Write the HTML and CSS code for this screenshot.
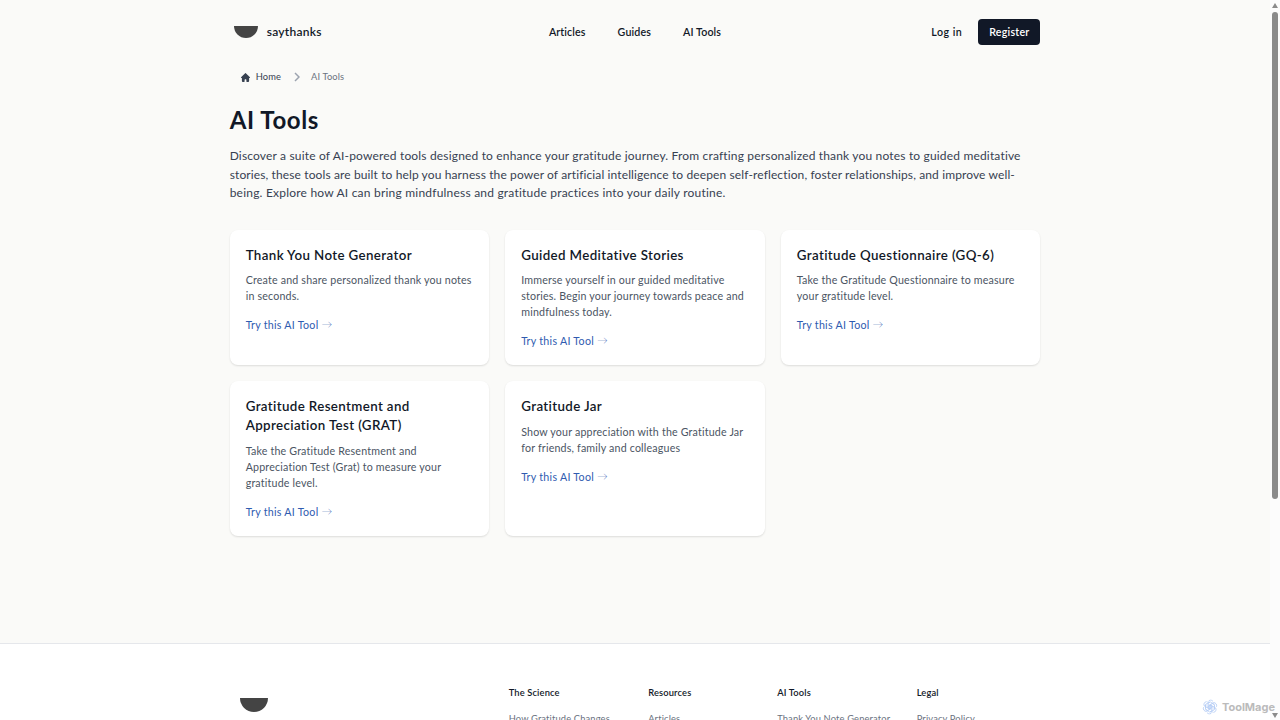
FILE: index.html
```
<!DOCTYPE html>
<html lang="en">
<head>
    <meta charset="UTF-8">
    <meta name="viewport" content="width=device-width, initial-scale=1.0">
    <title>AI Tools - saythanks</title>
    <link rel="stylesheet" href="styles.css">
</head>
<body>

    <div class="page">
        <header class="container header">
            <a class="brand" href="#">
                <svg class="logo" viewBox="0 0 24 12"><path d="M0 0h24a12 12 0 0 1-24 0z"/></svg>
                <span>saythanks</span>
            </a>
            <nav class="nav">
                <a href="#">Articles</a>
                <a href="#">Guides</a>
                <a href="#">AI Tools</a>
            </nav>
            <div class="account">
                <a href="#">Log in</a>
                <a class="button" href="#">Register</a>
            </div>
        </header>

        <main class="container">
            <nav class="breadcrumb">
                <svg class="home" viewBox="0 0 20 20"><path d="M19.7 9.300l-2-2-7-7a1 1 0 0 0-1.400 0l-7 7-2 2a1 1 0 0 0 1 1.700H2V18a2 2 0 0 0 2 2h3a1 1 0 0 0 1-1v-4a1 1 0 0 1 1-1h2a1 1 0 0 1 1 1v4a1 1 0 0 0 1 1h3a2 2 0 0 0 2-2v-7h.7a1 1 0 0 0 1-1.700z"/></svg>
                <a href="#">Home</a>
                <svg class="chevron" viewBox="0 0 6 10"><path d="M1 1l4 4-4 4"/></svg>
                <span>AI Tools</span>
            </nav>

            <h1>AI Tools</h1>
            <p class="intro">
                <span class="line1">Discover a suite of AI-powered tools designed to enhance your gratitude journey. From crafting personalized thank you notes to guided meditative</span><br>
                <span class="line2">stories, these tools are built to help you harness the power of artificial intelligence to deepen self-reflection, foster relationships, and improve well-</span><br>
                <span class="line3">being. Explore how AI can bring mindfulness and gratitude practices into your daily routine.</span>
            </p>

            <div class="cards">
                <div class="card">
                    <h2>Thank You Note Generator</h2>
                    <p>Create and share personalized thank you notes<br>in seconds.</p>
                    <a href="#">Try this AI Tool <span class="arrow">→</span></a>
                </div>
                <div class="card">
                    <h2>Guided Meditative Stories</h2>
                    <p>Immerse yourself in our guided meditative<br>stories. Begin your journey towards peace and<br>mindfulness today.</p>
                    <a href="#">Try this AI Tool <span class="arrow">→</span></a>
                </div>
                <div class="card">
                    <h2>Gratitude Questionnaire (GQ-6)</h2>
                    <p>Take the Gratitude Questionnaire to measure<br>your gratitude level.</p>
                    <a href="#">Try this AI Tool <span class="arrow">→</span></a>
                </div>
                <div class="card">
                    <h2>Gratitude Resentment and<br>Appreciation Test (GRAT)</h2>
                    <p>Take the Gratitude Resentment and<br>Appreciation Test (Grat) to measure your<br>gratitude level.</p>
                    <a href="#">Try this AI Tool <span class="arrow">→</span></a>
                </div>
                <div class="card">
                    <h2>Gratitude Jar</h2>
                    <p>Show your appreciation with the Gratitude Jar<br>for friends, family and colleagues</p>
                    <a href="#">Try this AI Tool <span class="arrow">→</span></a>
                </div>
            </div>
        </main>

        <footer class="footer">
            <div class="container footer-inner">
                <svg class="footer-logo" viewBox="0 0 24 12"><path d="M0 0h24a12 12 0 0 1-24 0z"/></svg>
                <div class="footer-links">
                    <div>
                        <h3>The Science</h3>
                        <a href="#">How Gratitude Changes</a>
                    </div>
                    <div>
                        <h3>Resources</h3>
                        <a href="#">Articles</a>
                    </div>
                    <div>
                        <h3>AI Tools</h3>
                        <a href="#">Thank You Note Generator</a>
                    </div>
                    <div>
                        <h3>Legal</h3>
                        <a href="#">Privacy Policy</a>
                    </div>
                </div>
            </div>
        </footer>
    </div>

    <div class="scrollbar">
        <div class="up"></div>
        <div class="thumb"></div>
        <div class="down"></div>
    </div>

    <div class="watermark">
        <svg viewBox="0 0 24 24">
            <path d="M9 4a4.500 4.500 0 0 1 7.500-.5M9 4v8l6 3.500M9 6.500l3.500-2 6 3.500"/>
            <path d="M9 4a4.500 4.500 0 0 1 7.500-.5M9 4v8l6 3.500M9 6.500l3.500-2 6 3.500" transform="rotate(60 12 12)"/>
            <path d="M9 4a4.500 4.500 0 0 1 7.500-.5M9 4v8l6 3.500M9 6.500l3.500-2 6 3.500" transform="rotate(120 12 12)"/>
            <path d="M9 4a4.500 4.500 0 0 1 7.500-.5M9 4v8l6 3.500M9 6.500l3.500-2 6 3.500" transform="rotate(180 12 12)"/>
            <path d="M9 4a4.500 4.500 0 0 1 7.500-.5M9 4v8l6 3.500M9 6.500l3.500-2 6 3.500" transform="rotate(240 12 12)"/>
            <path d="M9 4a4.500 4.500 0 0 1 7.500-.5M9 4v8l6 3.500M9 6.500l3.500-2 6 3.500" transform="rotate(300 12 12)"/>
        </svg>
        <span>ToolMage</span>
    </div>

</body>
</html>
```
FILE: styles.css
```
* {
    box-sizing: border-box;
}
body {
    margin: 0;
    height: 720px;
    display: flex;
    overflow: hidden;
    position: relative;
    font-family: Lato, sans-serif;
    font-size: 10.67px;
    line-height: 16px;
    color: #111827;
    background: #fafaf8;
}
a {
    color: inherit;
    text-decoration: none;
}
h1, h2, h3, p {
    margin: 0;
}
.page {
    width: 1270px;
    height: 720px;
    overflow: hidden;
    display: flex;
    flex-direction: column;
}
.container {
    width: 810.67px;
    margin: 0 auto;
    white-space: nowrap;
}
.header {
    height: 63px;
    flex: none;
    display: grid;
    grid-template-columns: 1fr auto 1fr;
    align-items: center;
    font-weight: 600;
    letter-spacing: 0.12px;
}
.brand {
    display: flex;
    align-items: center;
    gap: 9px;
    padding-left: 4px;
    font-size: 12px;
    letter-spacing: 0.25px;
}
.logo {
    width: 24px;
    height: 12px;
    fill: #444;
}
.nav {
    display: flex;
    gap: 32px;
}
.account {
    display: flex;
    align-items: center;
    justify-content: flex-end;
    gap: 16px;
    letter-spacing: 0.5px;
}
.button {
    width: 62px;
    padding: 5px 0;
    text-align: center;
    letter-spacing: 0.25px;
    color: white;
    background: #111827;
    border-radius: 4px;
}
.breadcrumb {
    height: 28px;
    display: flex;
    align-items: center;
    padding-left: 11px;
    font-size: 9.33px;
    letter-spacing: 0.12px;
    color: #6b7280;
}
.breadcrumb a {
    margin-left: 6px;
    color: #374151;
}
.home {
    width: 9px;
    height: 9px;
    fill: #374151;
}
.chevron {
    width: 6px;
    height: 10px;
    margin: 0 11px 0 13px;
    fill: none;
    stroke: #9ca3af;
    stroke-width: 1.5;
}
h1 {
    margin-top: 15px;
    font-size: 24px;
    line-height: 27px;
    letter-spacing: 0.6px;
}
.intro {
    margin-top: 14px;
    font-size: 12px;
    line-height: 18.67px;
    color: #374151;
}
.line1 {
    letter-spacing: 0.17px;
}
.line2 {
    letter-spacing: 0.12px;
}
.line3 {
    letter-spacing: 0.21px;
}
.cards {
    margin-top: 27px;
    display: grid;
    grid-template-columns: repeat(3, 1fr);
    gap: 16px;
}
.card {
    padding: 16px;
    background: white;
    border-radius: 8px;
    box-shadow: 0 1px 2px rgba(0, 0, 0, 0.12);
}
.card h2 {
    font-size: 13.33px;
    line-height: 18.67px;
    font-weight: 600;
    letter-spacing: 0.37px;
}
.card p {
    margin: 7.8px 0 13px;
    letter-spacing: 0.18px;
    color: #4b5563;
}
.card a {
    display: block;
    letter-spacing: 0.27px;
    color: #2f5bb0;
}
.arrow {
    display: inline-block;
    font-weight: 300;
    line-height: 10px;
    transform: translateY(-1px);
}
.footer {
    margin-top: auto;
    height: 77px;
    flex: none;
    background: white;
    border-top: 1px solid #e5e7eb;
}
.footer-inner {
    padding: 41px 0 0 10px;
    display: flex;
    align-items: flex-start;
    font-size: 9.33px;
    letter-spacing: 0.15px;
}
.footer-logo {
    width: 28px;
    height: 14px;
    margin-top: 13px;
    fill: #444;
}
.footer-links {
    margin-left: 241px;
    display: grid;
    grid-template-columns: 139.5px 129px 139.5px auto;
}
.footer h3 {
    margin-bottom: 10px;
    font-size: 9.33px;
    line-height: 16px;
    font-weight: 600;
}
.footer a {
    display: block;
    color: #6b7280;
}
.scrollbar {
    width: 10px;
    background: #fcfcfc;
    display: flex;
    flex-direction: column;
    align-items: center;
}
.up {
    margin-top: 3px;
    border: 3px solid transparent;
    border-top: 0;
    border-bottom: 5px solid #8b8b8b;
}
.thumb {
    margin-top: 4px;
    width: 6px;
    height: 487px;
    border-radius: 3px;
    background: #8b8b8b;
}
.down {
    margin-top: auto;
    margin-bottom: 2px;
    border: 3px solid transparent;
    border-bottom: 0;
    border-top: 5px solid #8b8b8b;
}
.watermark {
    position: absolute;
    right: 5px;
    bottom: 5px;
    display: flex;
    align-items: center;
    gap: 4px;
    font: 700 11px/16px Inter, sans-serif;
    color: #bbb;
}
.watermark svg {
    width: 16px;
    height: 16px;
    fill: none;
    stroke: #b5cdf5;
    stroke-width: 1.2;
}
```
